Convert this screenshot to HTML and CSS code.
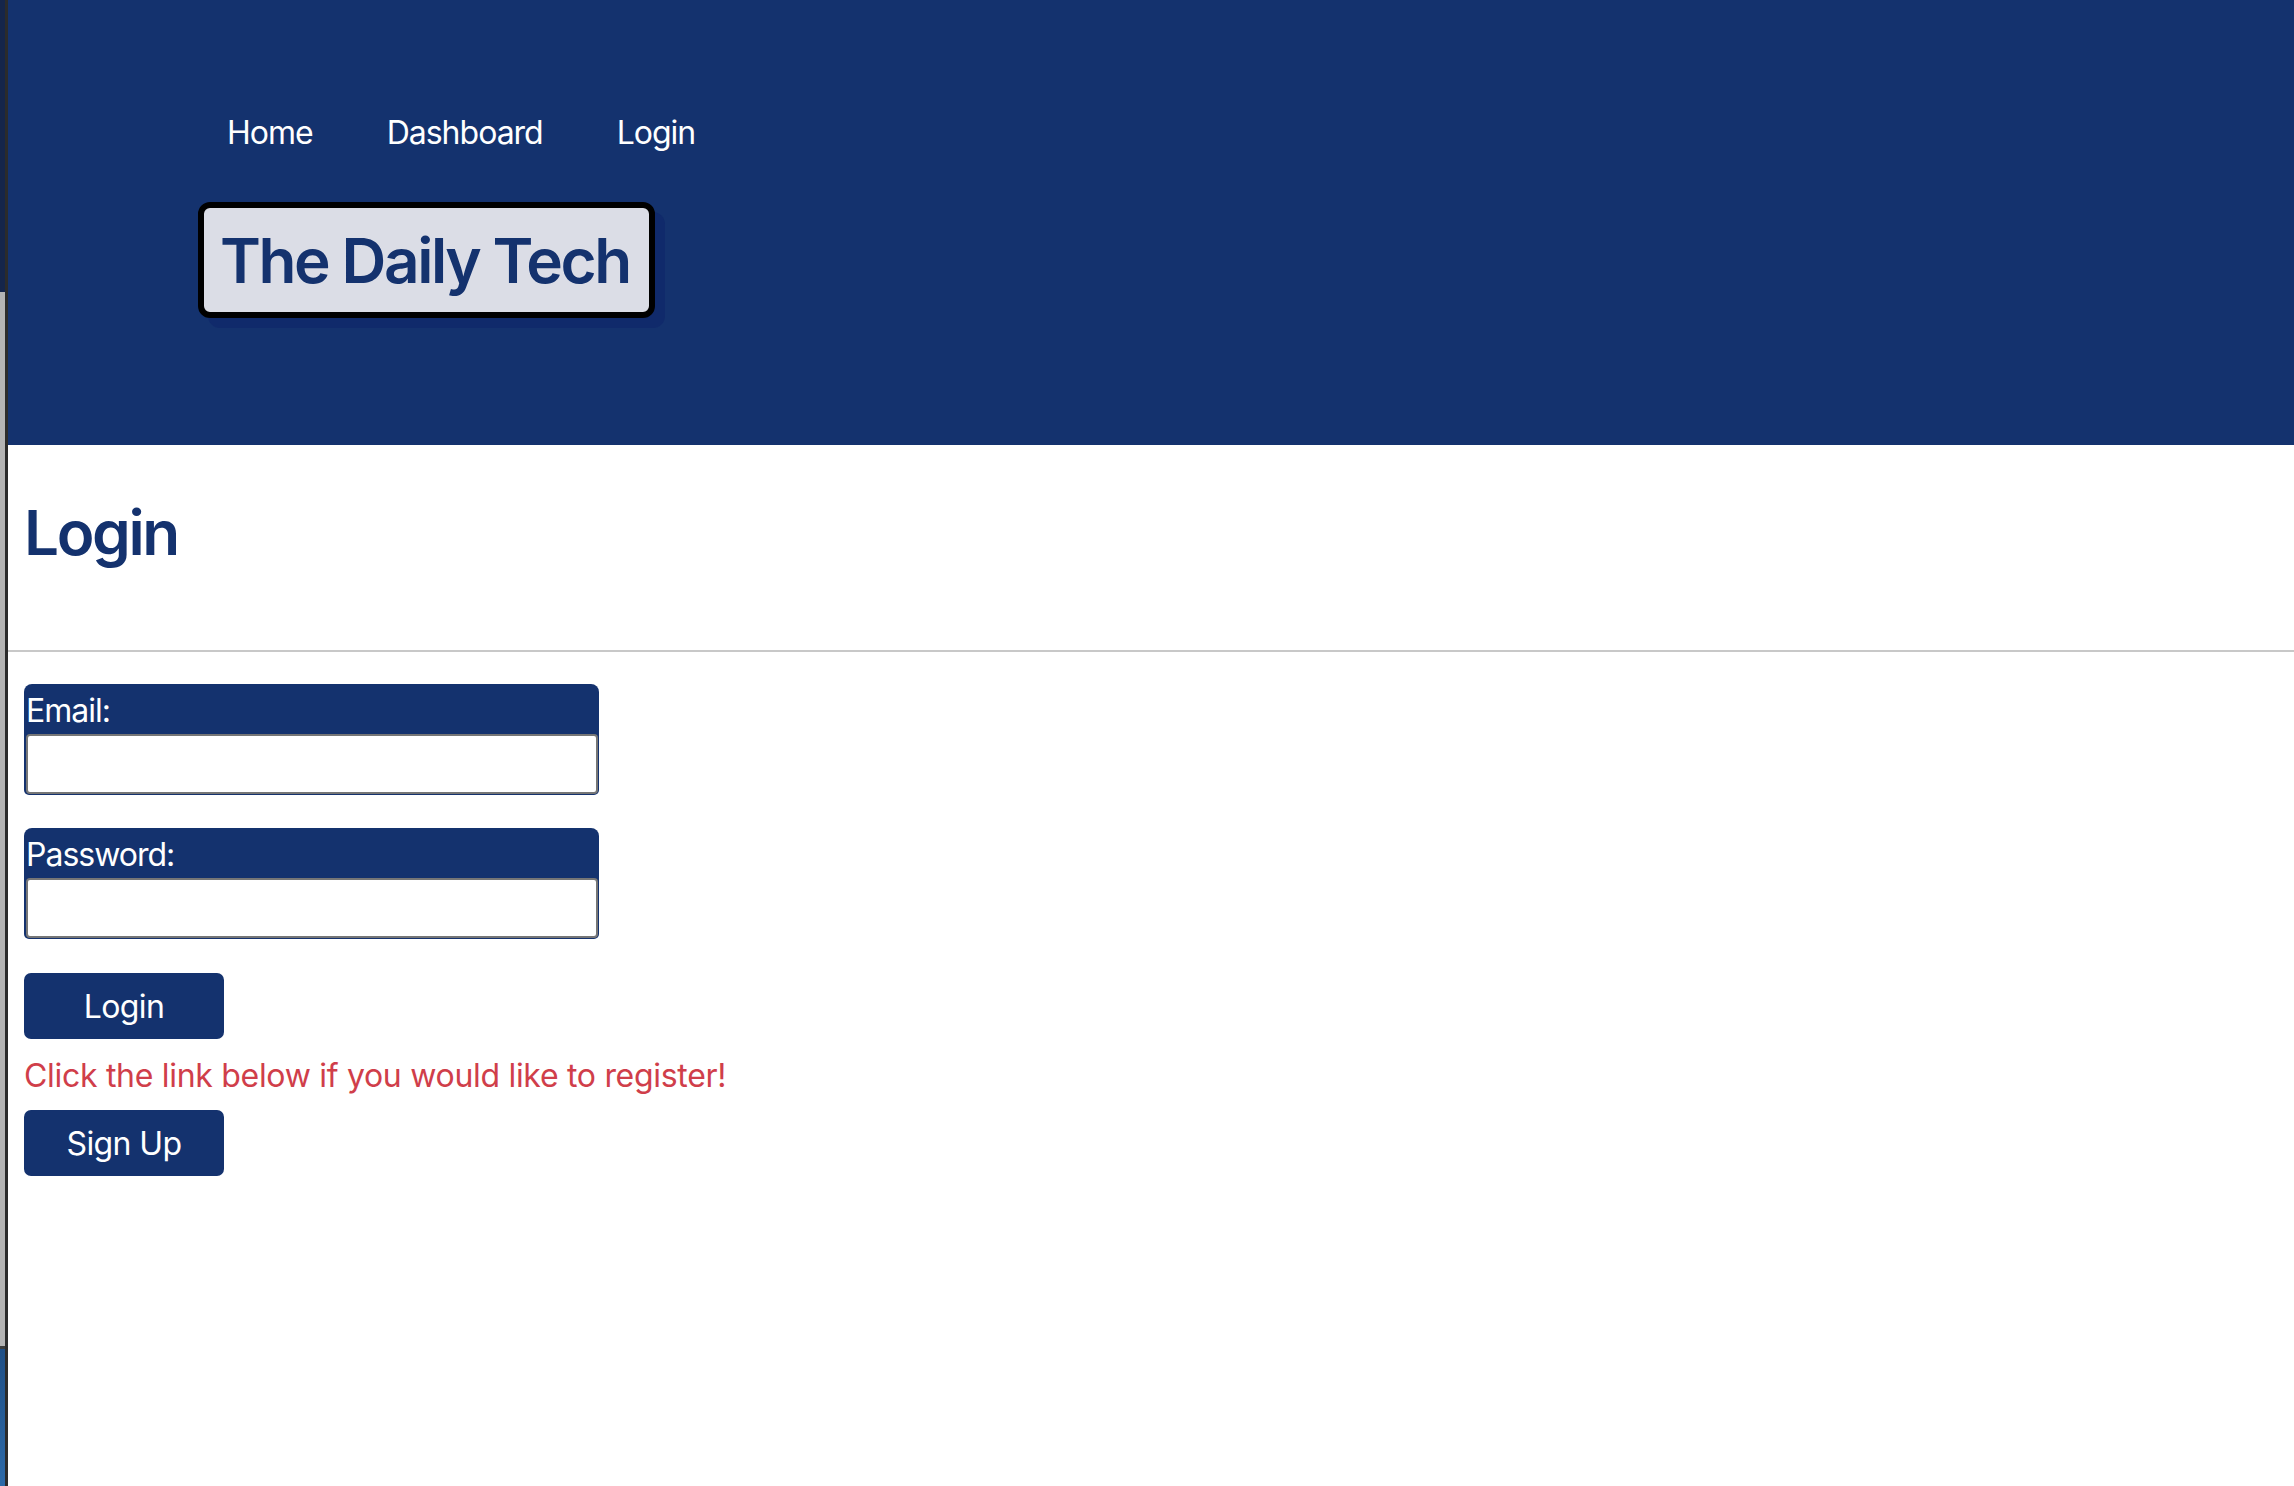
FILE: index.html
```html
<!DOCTYPE html>
<html lang="en">
<head>
<meta charset="utf-8">
<title>The Daily Tech - Login</title>
<link rel="stylesheet" href="styles.css">
</head>
<body>
  <div class="desk-edge"></div>
  <div class="window">
    <header class="site-header">
      <nav class="nav">
        <a href="#">Home</a>
        <a href="#">Dashboard</a>
        <a href="#">Login</a>
      </nav>
      <h1 class="brand">The Daily Tech</h1>
    </header>
    <section class="title-area">
      <h2 class="page-title">Login</h2>
    </section>
    <hr class="divider">
    <form class="login-form">
      <div class="field">
        <label for="email">Email:</label>
        <input id="email" type="email">
      </div>
      <div class="field">
        <label for="password">Password:</label>
        <input id="password" type="password">
      </div>
      <button type="button" class="btn">Login</button>
      <p class="register-note">Click the link below if you would like to register!</p>
      <button type="button" class="btn">Sign Up</button>
    </form>
  </div>
</body>
</html>
```

FILE: styles.css
```css
html, body {
  margin: 0;
  padding: 0;
  height: 100%;
}

body {
  display: flex;
  min-height: 1486px;
  font-family: Inter, "Liberation Sans", sans-serif;
  background: #ffffff;
}

.desk-edge {
  width: 5px;
  flex: none;
  border-right: 3px solid #2b2b2b;
  background: linear-gradient(to bottom,
    #15254a 0px, #15254a 292px,
    #b4b4b4 292px, #b4b4b4 1346px,
    #3d3d3d 1346px, #3d3d3d 1349px,
    #1f4f86 1349px, #2d6aa8 1486px);
}

.window {
  flex: 1;
  background: #ffffff;
}

.site-header {
  background: #14326e;
  height: 445px;
  box-sizing: border-box;
  padding-top: 113px;
}

.nav {
  display: flex;
  gap: 74px;
  padding-left: 219px;
}

.nav a {
  color: #ffffff;
  text-decoration: none;
  font-size: 32px;
  line-height: 39px;
  letter-spacing: -1px;
}

.brand {
  display: inline-block;
  margin: 50px 0 0 190px;
  padding: 14px 19px 13px 16px;
  background: #dbdde6;
  border: 6px solid #000000;
  border-radius: 12px;
  box-shadow: 10px 10px 0 #102a6b;
  color: #14326e;
  font-size: 62px;
  font-weight: 600;
  line-height: 77px;
  letter-spacing: -2.4px;
}

.title-area {
  padding: 49px 16px 0;
  height: 205px;
  box-sizing: border-box;
}

.page-title {
  margin: 0;
  color: #14326e;
  font-size: 62px;
  font-weight: 600;
  line-height: 77px;
  letter-spacing: -2.4px;
}

.divider {
  margin: 0;
  border: 0;
  height: 2px;
  background: #c8c8c8;
}

.login-form {
  padding: 32px 16px 0;
}

.field {
  width: 575px;
  box-sizing: border-box;
  background: #14326e;
  border-radius: 8px 8px 5px 5px;
  padding: 7px 1px 1px 2px;
  margin-bottom: 33px;
}

.field label {
  display: block;
  color: #ffffff;
  font-size: 32px;
  line-height: 39px;
  letter-spacing: -1px;
  margin-bottom: 4px;
}

.field input {
  display: block;
  width: 100%;
  height: 60px;
  box-sizing: border-box;
  border: 2px solid #767676;
  border-radius: 4px;
  background: #ffffff;
  margin: 0;
  font-family: inherit;
  font-size: 24px;
}

.btn {
  display: block;
  width: 200px;
  height: 66px;
  border: 0;
  border-radius: 7px;
  background: #14326e;
  color: #ffffff;
  font-family: inherit;
  font-size: 32px;
  letter-spacing: -0.6px;
  padding: 0;
  margin-top: 34px;
}

.register-note {
  margin: 17px 0 15px;
  color: #d03e4a;
  font-size: 32px;
  line-height: 39px;
  letter-spacing: -0.3px;
}

.register-note + .btn {
  margin-top: 0;
}
```
